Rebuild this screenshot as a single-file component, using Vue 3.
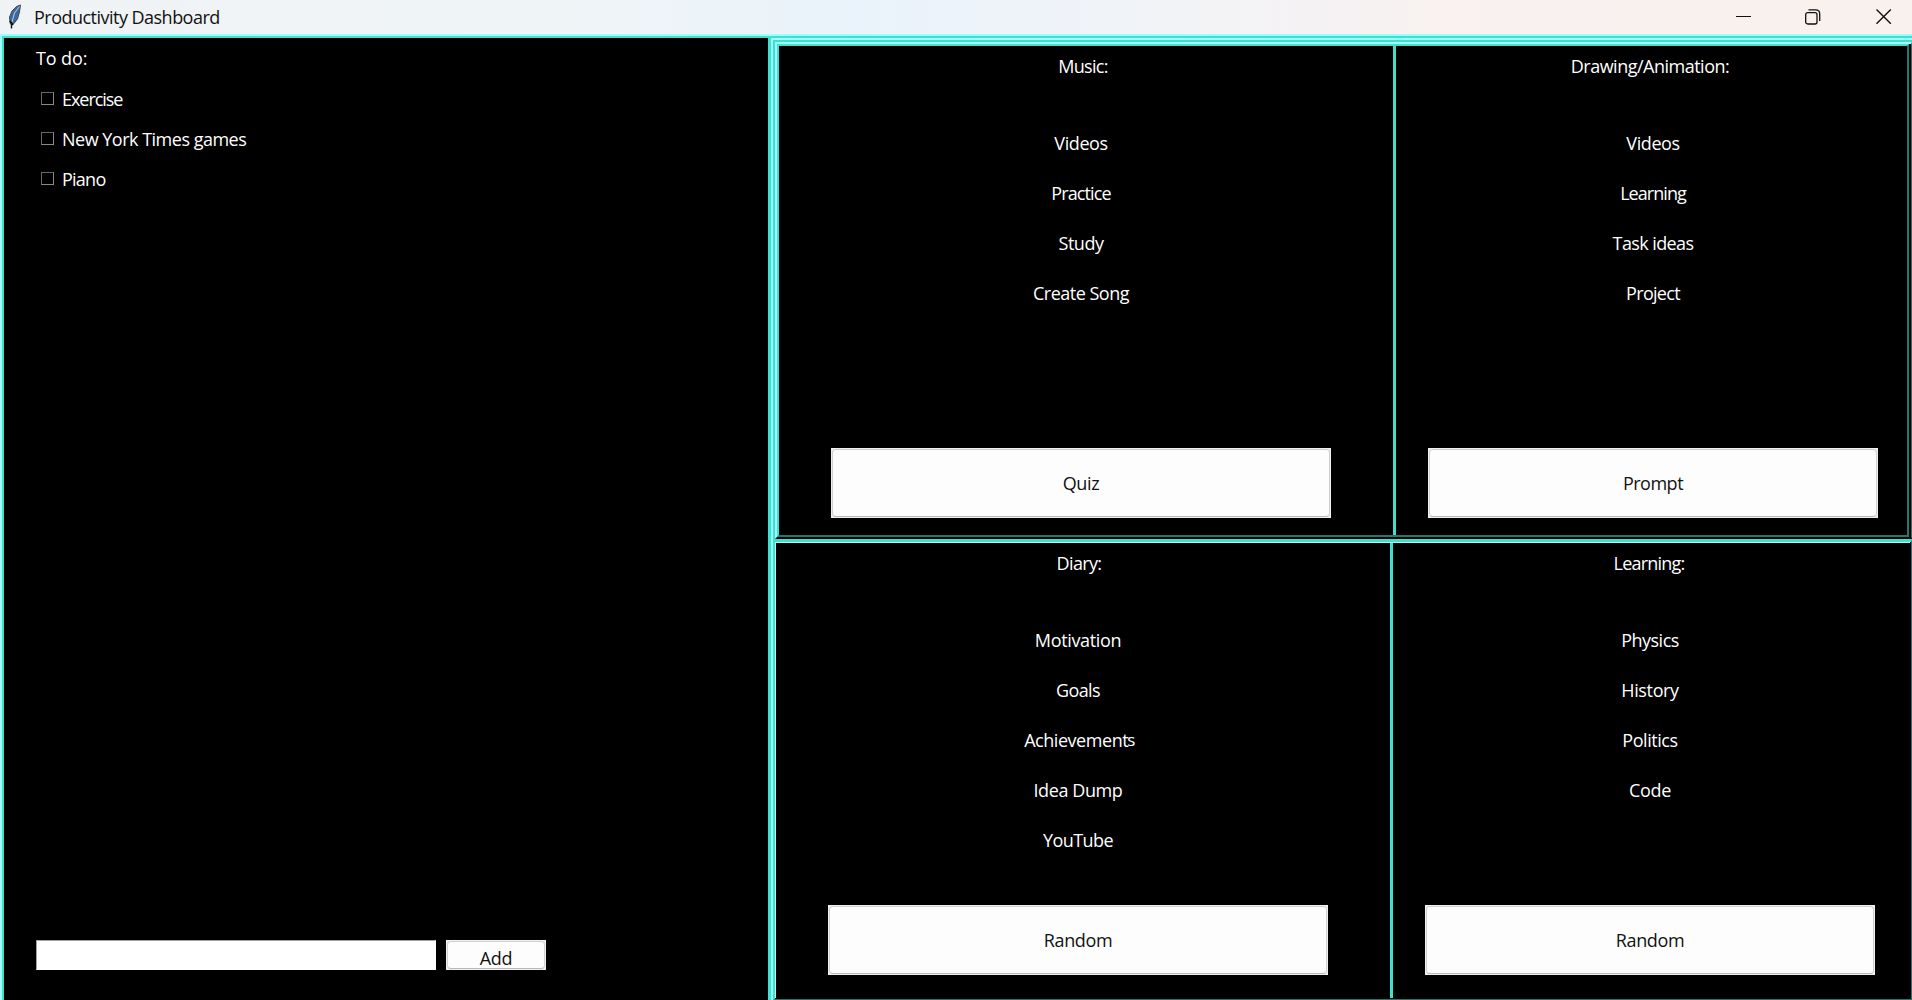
<script setup>
// Letter spacing per label, in px; anything not listed uses the default tracking.
const tracking = {
  'Exercise': -1.05, 'New York Times games': -0.5, 'Piano': -0.75,
  'Music:': -0.7, 'Videos': -0.4, 'Practice': -0.9, 'Study': -0.5, 'Create Song': -0.5,
  'Drawing/Animation:': -0.5, 'Learning': -0.95, 'Task ideas': -0.6, 'Project': -0.7, 'Prompt': -0.5,
  'Diary:': -0.65, 'Goals': -0.65, 'Achievements': -0.45, 'Idea Dump': -0.4, 'YouTube': -0.6,
  'Learning:': -0.8, 'Physics': -0.5, 'Politics': -0.45,
}
const track = (s) => (s in tracking ? { letterSpacing: tracking[s] + 'px' } : null)

const todos = ['Exercise', 'New York Times games', 'Piano']
const topPanels = [
  { title: 'Music:', items: ['Videos', 'Practice', 'Study', 'Create Song'], action: 'Quiz', cls: 'wide' },
  { title: 'Drawing/Animation:', items: ['Videos', 'Learning', 'Task ideas', 'Project'], action: 'Prompt', cls: 'narrow' },
]
const bottomPanels = [
  { title: 'Diary:', items: ['Motivation', 'Goals', 'Achievements', 'Idea Dump', 'YouTube'], action: 'Random', cls: 'wide' },
  { title: 'Learning:', items: ['Physics', 'History', 'Politics', 'Code'], action: 'Random', cls: 'narrow' },
]
</script>

<template>
  <div class="window">
    <header class="titlebar">
      <svg class="feather" width="14" height="26" viewBox="0 0 14 26">
        <path d="M12.5 1 L8.5 2.5 L4 7 L1.5 13 L2 19 L3.5 21 L5.5 20 L9.5 15 L11.5 8 Z" fill="#3b69a8" stroke="#4a4a4c" stroke-width="1" />
        <path d="M11.5 2.5 L6.5 9 L3.5 20" fill="none" stroke="#c3ccd8" stroke-width="1" />
        <path d="M3.5 18 V24.500" stroke="#111" stroke-width="1.4" />
        <path d="M2 17 L5 21" stroke="#111" stroke-width="1.6" />
      </svg>
      <span class="caption">Productivity Dashboard</span>
      <div class="controls">
        <svg width="16" height="16" viewBox="0 0 16 16"><path d="M0 7.500 H15" stroke="#111" stroke-width="1" /></svg>
        <svg class="restore" width="16" height="16" viewBox="0 0 16 16" fill="none" stroke="#111" stroke-width="1.300">
          <rect x=".7" y="3.700" width="11.300" height="11.300" rx="2" />
          <path d="M3.500 .8 H10.700 Q14.700 .8 14.700 4.800 V12" />
        </svg>
        <svg width="16" height="16" viewBox="0 0 16 16"><path d="M.5 .5 L14.800 14.800 M14.800 .5 L.5 14.800" stroke="#111" stroke-width="1.400" /></svg>
      </div>
    </header>

    <main class="frame">
      <section class="todo">
        <h2 class="todo-title">To do:</h2>
        <label v-for="t in todos" :key="t" class="check">
          <i class="box"></i><span :style="track(t)">{{ t }}</span>
        </label>
        <div class="entry">
          <div class="field"></div>
          <div class="btn add"><span>Add</span></div>
        </div>
      </section>

      <section class="right">
        <div class="top">
          <div class="top-inner">
            <article v-for="p in topPanels" :key="p.title" class="panel" :class="p.cls">
              <h2 :style="track(p.title)">{{ p.title }}</h2>
              <ul><li v-for="i in p.items" :key="i" :style="track(i)">{{ i }}</li></ul>
              <div class="btn big"><span :style="track(p.action)">{{ p.action }}</span></div>
            </article>
          </div>
        </div>
        <div class="bottom">
          <article v-for="p in bottomPanels" :key="p.title" class="panel" :class="p.cls">
            <h2 :style="track(p.title)">{{ p.title }}</h2>
            <ul>
              <li v-for="i in p.items" :key="i" :style="track(i)">
                <span v-if="i === 'Achievements'" class="nudged">Achievement<span class="raised">s</span></span>
                <template v-else>{{ i }}</template>
              </li>
            </ul>
            <div class="btn big"><span>{{ p.action }}</span></div>
          </article>
        </div>
      </section>
    </main>
  </div>
</template>

<style>
body { margin: 0; background: #000; overflow: hidden; }
</style>

<style scoped>
* { box-sizing: border-box; }
.window {
  width: 1912px; height: 1000px; display: flex; flex-direction: column;
  background: #000; color: #fff;
  font-family: "Open Sans", "Noto Sans", sans-serif;
  font-size: 18px; line-height: 24px; letter-spacing: -0.35px;
}
h2, ul { margin: 0; padding: 0; font: inherit; list-style: none; }
.titlebar {
  height: 34px; flex: none; display: flex; align-items: center; color: #111;
  padding-left: 8px;
  background: linear-gradient(90deg, #f0f3f5 0%, #eff4f7 30%, #eaf3fb 45%, #f0f3f8 58%, #f9f1ef 78%, #f9f1ee 100%);
}
.feather { margin-top: -1px; }
.caption { margin-left: 12px; letter-spacing: -0.52px; }
.controls { margin-left: auto; display: flex; gap: 54px; padding-right: 20px; }
.restore { margin: 0 1px 0 -1px; }
.frame {
  flex: 1; display: flex; min-height: 0;
  border-top: 2px solid #a0fffc; border-left: 2px solid #a0fffc;
}
.todo {
  width: 769px; flex: none; display: flex; flex-direction: column;
  border: solid #40e0d0; border-width: 2px 3px 0 2px;
  padding: 8px 0 30px 32px;
}
.todo-title { height: 41px; letter-spacing: -0.1px; }
.check { display: flex; height: 40px; align-items: flex-start; padding-left: 5px; }
.check span { margin-left: 8px; }
.box { width: 13px; height: 13px; margin-top: 5px; border: 1px solid #696969; border-right-color: #8a8a8a; border-bottom-color: #8a8a8a; }
.entry { margin-top: auto; display: flex; gap: 10px; }
.field { width: 400px; height: 30px; background: #fff; border: 1px solid #fff; border-top-color: #a0a0a0; border-left-color: #a0a0a0; }
.btn {
  position: relative; background: #f0f0f0; color: #111; display: flex; align-items: center; justify-content: center;
}
.btn::before {
  content: ""; position: absolute; inset: 1px; background: #fdfdfd; border: 1px solid #d0d0d0;
  border-bottom-color: #b9b9b9; border-radius: 4px;
}
.btn span { position: relative; }
.add { width: 100px; height: 30px; padding-top: 6px; }
.right {
  flex: 1; display: flex; flex-direction: column; min-width: 0;
  border-top: 2px solid #40e0d0;
}
.top {
  height: 501px; flex: none;
  border-top: 2px solid #a0fffc; border-left: 2px solid #a0fffc;
}
.top-inner {
  position: relative; height: 499px; display: flex;
  border-top: 2px solid #40e0d0; border-left: 2px solid #40e0d0;
  padding: 6px 5px 4px 4px;
}
/* ridge around the upper pair of panels */
.top-inner::before {
  content: ""; position: absolute; inset: 0; border: 2px solid #a0fffc;
  border-right: 1px solid #24786e; border-bottom-color: #000;
}
.top-inner::after {
  content: ""; position: absolute; inset: 2px 3px 2px 2px; border: 2px solid #40e0d0;
  border-right-color: #24786e; border-bottom-color: #24786e;
}
.panel { display: flex; flex-direction: column; text-align: center; }
.panel.wide { border-right: 3px solid #40e0d0; }
.panel h2 { height: 75px; padding-top: 8px; }
.panel li { height: 50px; }
.panel ul { padding-top: 10px; }
.big { height: 70px; margin-top: auto; flex: none; }
.top .panel { padding-bottom: 17px; margin-top: -2px; }
.top .wide { width: 617px; flex: none; }
.top .narrow { flex: 1; min-width: 0; }
.top .wide .big { margin-left: 52px; width: 500px; }
.top .wide h2 { padding-right: 6px; }
.top .wide ul { padding-right: 10px; }
.top .narrow .big { margin-left: 32px; width: 450px; }
.top .narrow h2 { padding-right: 6px; }
.bottom {
  flex: 1; display: flex; min-height: 0; position: relative;
  border-top: 3px solid #40e0d0;
  margin-left: 2px; border-left: 2px solid #40e0d0;
  border-right: 1px solid #24786e; border-bottom: 1px solid #24786e;
}
.bottom::before { content: ""; position: absolute; inset: 0 1px 1px 0; border: solid #a0fffc; border-width: 1px 0 0 1px; }
.bottom::after { content: ""; position: absolute; left: -4px; top: -3px; bottom: -1px; width: 2px; background: #a0fffc; }
.bottom .panel { padding-bottom: 23px; padding-top: 1px; margin-bottom: 1px; }
.bottom .wide { width: 618px; flex: none; }
.bottom .narrow { flex: 1; min-width: 0; }
.bottom .wide .big { margin-left: 53px; width: 500px; }
.bottom .wide h2 { padding-right: 7px; }
.bottom .wide ul { padding-right: 9px; }
.bottom .narrow .big { margin-left: 32px; width: 450px; }
.narrow h2, .narrow ul { width: 514px; }
.bottom .narrow h2 { padding-right: 2px; }
.nudged { position: relative; left: 2px; }
.raised { position: relative; top: -1px; left: -1px; font-size: 17px; }
</style>
